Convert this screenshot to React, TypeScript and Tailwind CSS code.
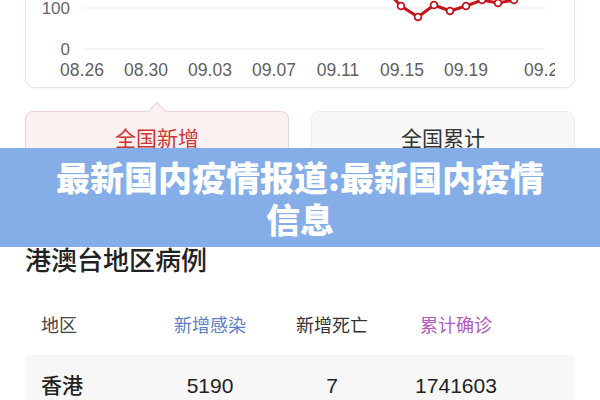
import React from 'react';

// label, day offset from 08.26
const xLabels: [string, number][] = [
  ['08.26', 0],
  ['08.30', 4],
  ['09.03', 8],
  ['09.07', 12],
  ['09.11', 16],
  ['09.15', 20],
  ['09.19', 24],
  ['09.24', 29],
];

// svg coords: page x - 25, page y + 30
const points: [number, number][] = [
  [359, 18],
  [375, 35],
  [392, 46],
  [408, 34],
  [424, 40],
  [440, 35],
  [456, 29],
  [472, 32],
  [488, 29],
];

const TrendChart: React.FC = () => {
  const d = points.map(([x, y], i) => `${i === 0 ? 'M' : 'L'}${x} ${y}`).join(' ');
  return (
    <svg width="550" height="118" className="absolute inset-0" style={{ fontFamily: "'Liberation Sans', 'Noto Sans', sans-serif" }}>
      <defs>
        <clipPath id="plot">
          <rect x="0" y="0" width="529" height="118" />
        </clipPath>
      </defs>
      <line x1="57" y1="37" x2="519" y2="37" stroke="#ececec" strokeWidth="1" />
      <line x1="57" y1="78" x2="519" y2="78" stroke="#ececec" strokeWidth="1" />
      <text x="44" y="43" textAnchor="end" fontSize="17" fill="#666">100</text>
      <text x="44" y="84" textAnchor="end" fontSize="17" fill="#666">0</text>
      <g clipPath="url(#plot)">
        {xLabels.map(([l, day]) => (
          <text key={l} x={56 + day * 16} y="105" textAnchor="middle" fontSize="17.5" fill="#5f5f5f">
            {l}
          </text>
        ))}
      </g>
      <path d={d} fill="none" stroke="#c4141c" strokeWidth="3" strokeLinejoin="round" />
      {points.map(([x, y]) => (
        <circle key={x} cx={x} cy={y} r="3.4" fill="#fff" stroke="#c4141c" strokeWidth="1.8" />
      ))}
    </svg>
  );
};

export default function App() {
  return (
    <div className="relative w-[600px] h-[400px] overflow-hidden bg-white font-['Liberation_Sans','Noto_Sans_CJK_SC',sans-serif]">
      <div className="px-[25px]">
        {/* chart card, scrolled partly out of view */}
        <div className="relative -mt-[30px] h-[118px] rounded-[10px] border border-[#e6e6e6] shadow-[0_1px_3px_rgba(0,0,0,0.04)]">
          <TrendChart />
        </div>

        {/* tabs */}
        <div className="mt-[23px] flex gap-[22px]">
          <div className="relative flex h-[56px] w-[264px] items-center justify-center rounded-[8px] border border-[#ecd3d3] bg-[#fdf1f1]">
            <div className="absolute -top-[7px] left-[124px] h-[14px] w-[14px] rotate-45 border-l border-t border-[#ecd3d3] bg-[#fdf1f1]" />
            <span className="text-[21px] text-[#cf3530]">全国新增</span>
          </div>
          <div className="flex h-[56px] w-[264px] items-center justify-center rounded-[8px] border border-[#eeeeee] bg-[#f7f7f7]">
            <span className="text-[21px] text-[#333]">全国累计</span>
          </div>
        </div>

        {/* region list */}
        <h2 className="mt-[78px] text-[26px] leading-[32px] font-medium text-[#222]">港澳台地区病例</h2>
        <div className="mt-[37px] grid grid-cols-[124px_122px_122px_126px] text-[18px] leading-[24px]">
          <div className="pl-4 text-[#444]">地区</div>
          <div className="flex justify-center text-[#5b80c6]">新增感染</div>
          <div className="flex justify-center text-[#333]">新增死亡</div>
          <div className="flex justify-center text-[#b25ac2]">累计确诊</div>
        </div>
        <div className="mt-[17px] grid h-[60px] grid-cols-[124px_122px_122px_126px] bg-[#f7f7f7] pt-[17px] text-[21px] leading-[28px] text-[#222]">
          <div className="pl-4 font-medium">香港</div>
          <div className="flex justify-center">5190</div>
          <div className="flex justify-center">7</div>
          <div className="flex justify-center">1741603</div>
        </div>
      </div>

      {/* title banner over the page */}
      <div className="absolute left-0 right-0 top-[148px] flex h-[99px] items-center justify-center bg-[#7eaae8]/95">
        <p className="w-[500px] text-center text-[34px] leading-[42px] font-black text-white font-['Noto_Sans_CJK_SC',sans-serif]">
          最新国内疫情报道:最新国内疫情信息
        </p>
      </div>
    </div>
  );
}
